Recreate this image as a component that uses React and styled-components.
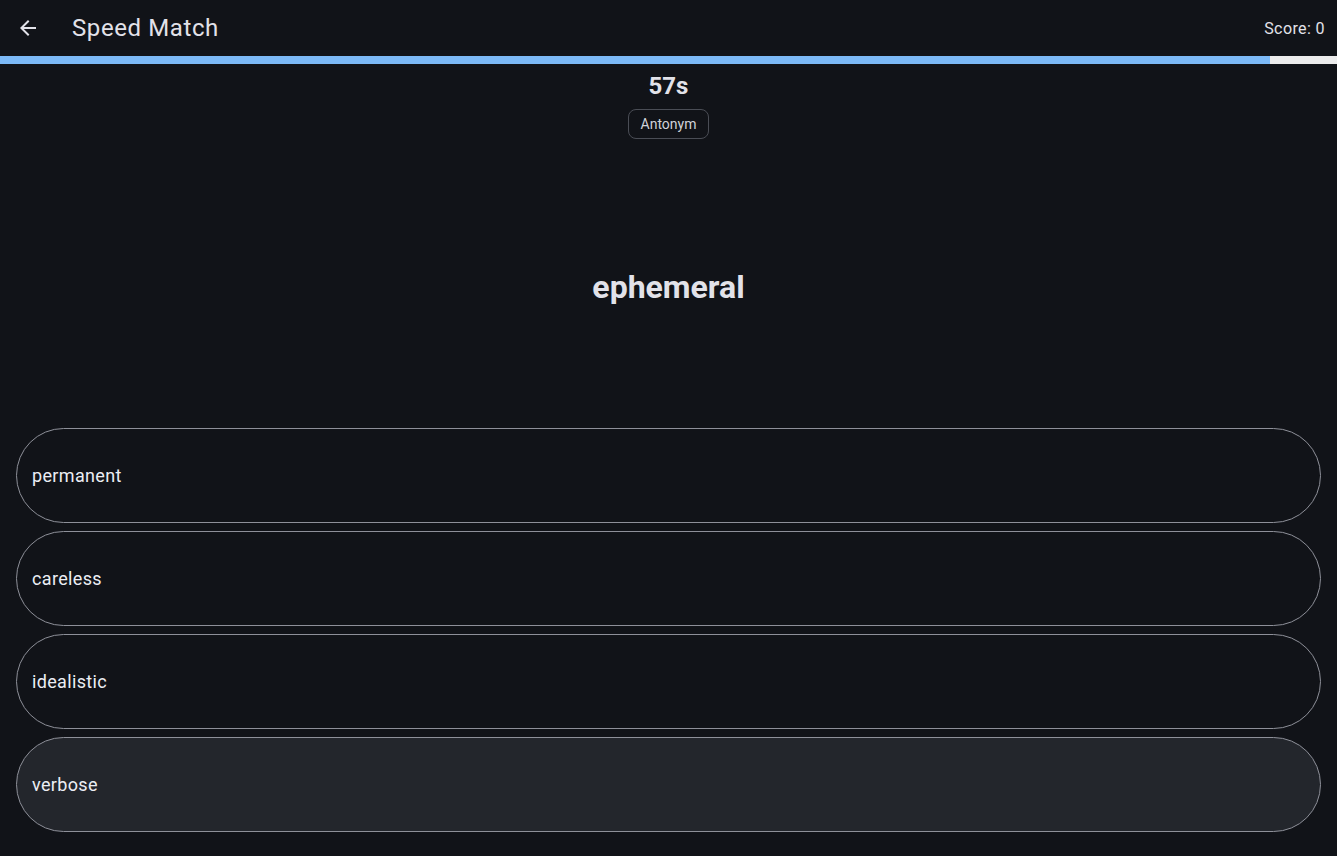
import React from 'react'
import styled, { createGlobalStyle } from 'styled-components'

const GlobalStyle = createGlobalStyle`
  html, body {
    margin: 0;
    padding: 0;
    background: #111318;
    font-family: Roboto, "Noto Sans", sans-serif;
    color: #e2e2e9;
  }
`

const Page = styled.div`
  display: flex;
  flex-direction: column;
  height: 100vh;
  background: #111318;
`

const TopBar = styled.header`
  display: flex;
  align-items: center;
  height: 56px;
  padding: 0 12px 0 16px;
`

const BackButton = styled.button`
  display: flex;
  align-items: center;
  justify-content: center;
  width: 24px;
  height: 24px;
  padding: 0;
  border: none;
  background: none;
  color: #e2e2e9;
  cursor: pointer;
`

const Title = styled.h1`
  flex: 1;
  margin: 0 0 0 32px;
  font-size: 24px;
  font-weight: 400;
  letter-spacing: 0.6px;
  color: #e2e2e9;
`

const Score = styled.span`
  font-size: 16px;
  letter-spacing: 0.4px;
  color: #e2e2e9;
`

const Track = styled.div`
  height: 8px;
  background: #ececec;
`

const Fill = styled.div`
  height: 100%;
  background: #7cb9f6;
`

const Status = styled.div`
  display: flex;
  flex-direction: column;
  align-items: center;
  padding-top: 8px;
`

const Timer = styled.div`
  font-size: 24px;
  font-weight: 700;
  line-height: 28px;
  color: #e2e2e9;
`

const Chip = styled.span`
  margin-top: 9px;
  padding: 0 12px;
  height: 28px;
  line-height: 28px;
  font-size: 14px;
  color: #d0d2da;
  border: 1px solid #4a4d55;
  border-radius: 8px;
`

const WordArea = styled.div`
  flex: 1;
  display: flex;
  align-items: center;
  justify-content: center;
  padding-top: 6px;
`

const Word = styled.h2`
  margin: 0;
  font-size: 32px;
  font-weight: 700;
  color: #e2e2e9;
`

const Options = styled.div`
  display: flex;
  flex-direction: column;
  gap: 8px;
  padding: 0 16px 24px;
`

const Option = styled.button`
  display: flex;
  align-items: center;
  height: 95px;
  padding: 0 15px;
  border: 1px solid #8e9099;
  border-radius: 48px;
  background: ${p => (p.$hover ? '#23262c' : 'transparent')};
  color: #eceef4;
  font-family: Roboto, "Noto Sans", sans-serif;
  font-size: 18px;
  font-weight: 400;
  letter-spacing: 0.35px;
  text-align: left;
  cursor: pointer;
`

const choices = ['permanent', 'careless', 'idealistic', 'verbose']

export default function App() {
  const timeLeft = 57
  const total = 60

  return (
    <>
      <GlobalStyle />
      <Page>
        <TopBar>
          <BackButton aria-label="back">
            <svg width="24" height="24" viewBox="0 0 24 24" fill="currentColor">
              <path d="M20 11H7.83l5.59-5.59L12 4l-8 8 8 8 1.41-1.41L7.83 13H20v-2z" />
            </svg>
          </BackButton>
          <Title>Speed Match</Title>
          <Score>Score: 0</Score>
        </TopBar>
        <Track>
          <Fill style={{ width: `${(timeLeft / total) * 100}%` }} />
        </Track>
        <Status>
          <Timer>{timeLeft}s</Timer>
          <Chip>Antonym</Chip>
        </Status>
        <WordArea>
          <Word>ephemeral</Word>
        </WordArea>
        <Options>
          {choices.map((c, i) => (
            <Option key={c} $hover={i === 3}>{c}</Option>
          ))}
        </Options>
      </Page>
    </>
  )
}
